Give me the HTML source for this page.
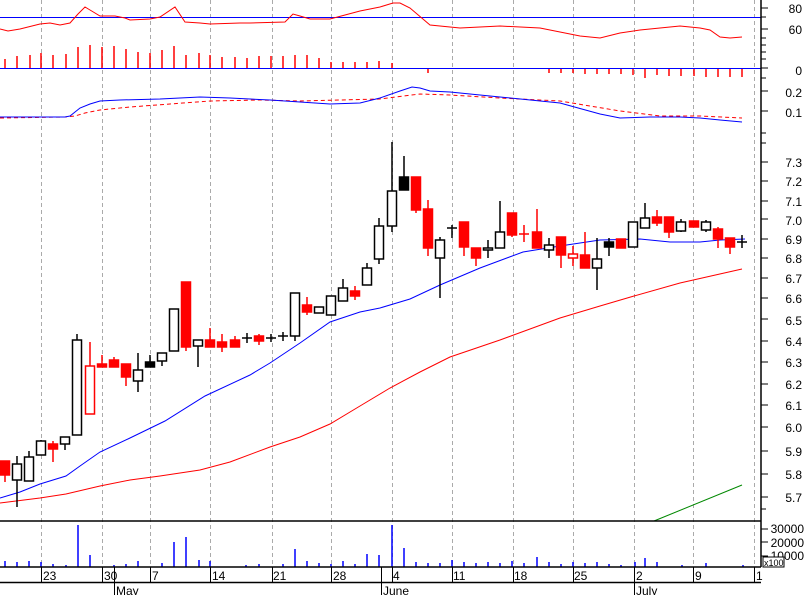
<!DOCTYPE html>
<html><head><style>
html,body{margin:0;padding:0;background:#fff;}
svg{display:block;font-family:"Liberation Sans",sans-serif;}
</style></head><body>
<svg width="806" height="595" viewBox="0 0 806 595" xmlns="http://www.w3.org/2000/svg">
<rect width="806" height="595" fill="#fff"/>
<!-- grid -->
<g stroke="#aaa" stroke-dasharray="4,3" stroke-width="1">
<line x1="41.5" y1="0" x2="41.5" y2="567"/><line x1="102.5" y1="0" x2="102.5" y2="567"/>
<line x1="150.5" y1="0" x2="150.5" y2="567"/><line x1="210.5" y1="0" x2="210.5" y2="567"/>
<line x1="272.5" y1="0" x2="272.5" y2="567"/><line x1="331.5" y1="0" x2="331.5" y2="567"/>
<line x1="392.5" y1="0" x2="392.5" y2="567"/><line x1="452.5" y1="0" x2="452.5" y2="567"/>
<line x1="513.5" y1="0" x2="513.5" y2="567"/><line x1="573.5" y1="0" x2="573.5" y2="567"/>
<line x1="634.5" y1="0" x2="634.5" y2="567"/><line x1="693.5" y1="0" x2="693.5" y2="567"/>
<line x1="754.5" y1="0" x2="754.5" y2="567"/>
</g>
<!-- RSI -->
<line x1="0" y1="17.5" x2="761" y2="17.5" stroke="#00f"/>
<polyline fill="none" stroke="#f00" points="0,29 8,31 20,29 40,24 50,23 60,25 70,23 78,14 85,7 90,10 100,16 115,16 125,18 130,20 150,19 160,17 175,7 185,22 200,23 210,24 240,23 250,23 285,22 293,14 300,16 310,19 330,19 345,15 360,11 380,7 393,3 400,3 410,8 430,25 460,28 500,26 540,28 580,36 600,38 620,33 640,30 660,28 680,26 700,28 710,30 720,37 730,38 742,37"/>
<!-- MACD hist -->
<g stroke="#f00" stroke-width="1.5">
<line x1="5" y1="68" x2="5" y2="59"/><line x1="17" y1="68" x2="17" y2="56"/><line x1="30" y1="68" x2="30" y2="55"/><line x1="41" y1="68" x2="41" y2="53"/><line x1="53" y1="68" x2="53" y2="55"/><line x1="66" y1="68" x2="66" y2="54"/><line x1="78" y1="68" x2="78" y2="47"/><line x1="90" y1="68" x2="90" y2="45"/><line x1="102" y1="68" x2="102" y2="47"/><line x1="114" y1="68" x2="114" y2="46"/><line x1="126" y1="68" x2="126" y2="49"/><line x1="138" y1="68" x2="138" y2="52"/><line x1="150" y1="68" x2="150" y2="53"/><line x1="162" y1="68" x2="162" y2="50"/><line x1="174" y1="68" x2="174" y2="46"/><line x1="186" y1="68" x2="186" y2="55"/><line x1="199" y1="68" x2="199" y2="53"/><line x1="210" y1="68" x2="210" y2="55"/><line x1="222" y1="68" x2="222" y2="57"/><line x1="235" y1="68" x2="235" y2="57"/><line x1="247" y1="68" x2="247" y2="58"/><line x1="259" y1="68" x2="259" y2="56"/><line x1="271" y1="68" x2="271" y2="56"/><line x1="283" y1="68" x2="283" y2="56"/><line x1="295" y1="68" x2="295" y2="55"/><line x1="307" y1="68" x2="307" y2="55"/><line x1="319" y1="68" x2="319" y2="58"/><line x1="331" y1="68" x2="331" y2="62"/><line x1="343" y1="68" x2="343" y2="62"/><line x1="355" y1="68" x2="355" y2="62"/><line x1="367" y1="68" x2="367" y2="62"/><line x1="379" y1="68" x2="379" y2="61"/><line x1="392" y1="68" x2="392" y2="63"/>
<line x1="428" y1="68" x2="428" y2="73"/><line x1="549" y1="68" x2="549" y2="73"/><line x1="561" y1="68" x2="561" y2="73"/><line x1="573" y1="68" x2="573" y2="73"/><line x1="585" y1="68" x2="585" y2="74"/><line x1="597" y1="68" x2="597" y2="74"/><line x1="609" y1="68" x2="609" y2="74"/><line x1="621" y1="68" x2="621" y2="74"/><line x1="633" y1="68" x2="633" y2="75"/><line x1="645" y1="68" x2="645" y2="78"/><line x1="657" y1="68" x2="657" y2="75"/><line x1="669" y1="68" x2="669" y2="76"/><line x1="681" y1="68" x2="681" y2="76"/><line x1="694" y1="68" x2="694" y2="76"/><line x1="706" y1="68" x2="706" y2="77"/><line x1="718" y1="68" x2="718" y2="77"/><line x1="730" y1="68" x2="730" y2="77"/><line x1="742" y1="68" x2="742" y2="77"/>
</g>
<line x1="0" y1="68.5" x2="761" y2="68.5" stroke="#00f"/>
<!-- MACD lines -->
<polyline fill="none" stroke="#f00" stroke-dasharray="4,3" points="0,118 65,117 75,116 85,113 100,110 130,107 170,104 210,101 260,100 300,101 380,99 420,94 450,95 500,98 560,101 620,111 660,116 700,116 742,118"/>
<polyline fill="none" stroke="#00f" points="0,117 65,117 70,116 80,108 90,104 100,101 120,100 160,99 200,97 230,98 270,100 300,102 330,104 360,103 380,98 400,91 412,87 420,88 430,91 450,92 500,97 560,103 600,114 620,118 650,117 680,117 700,118 720,120 742,122"/>
<!-- MAs -->
<polyline fill="none" stroke="#f00" points="0,503 40,498 66,494 100,486 130,480 160,476 200,470 230,462 270,447 300,437 330,424 360,406 390,388 420,372 450,357 500,340 560,318 600,306 634,296 680,283 742,269"/>
<polyline fill="none" stroke="#00f" points="0,498 20,492 40,484 66,476 80,466 100,452 130,438 165,421 205,396 250,375 270,363 300,343 330,322 360,312 380,308 410,299 440,285 480,268 523,252 560,246 600,240 640,239 670,242 700,242 720,240 745,239"/>
<line x1="654" y1="521" x2="742" y2="485" stroke="#080"/>
<!-- candles -->
<g stroke-width="1.5">
<g stroke="#f00" fill="#f00">
<line x1="5" y1="461" x2="5" y2="482"/><rect x="0.5" y="461" width="9" height="14"/>
<line x1="53" y1="441" x2="53" y2="462"/><rect x="48.5" y="444" width="9" height="5"/>
<line x1="90" y1="342" x2="90" y2="366"/><rect x="85.5" y="366" width="9" height="48" fill="#fff"/>
<line x1="102" y1="355" x2="102" y2="364"/><rect x="97.5" y="364" width="9" height="3"/>
<line x1="114" y1="357" x2="114" y2="367"/><rect x="109.5" y="360" width="9" height="7"/>
<line x1="126" y1="364" x2="126" y2="386"/><rect x="121.5" y="364" width="9" height="13"/>
<line x1="186" y1="282" x2="186" y2="351"/><rect x="181.5" y="282" width="9" height="65"/>
<line x1="210" y1="328" x2="210" y2="347"/><rect x="205.5" y="340" width="9" height="7"/>
<line x1="222" y1="334" x2="222" y2="352"/><rect x="217.5" y="342" width="9" height="5"/>
<line x1="235" y1="336" x2="235" y2="347"/><rect x="230.5" y="340" width="9" height="7"/>
<line x1="259" y1="334" x2="259" y2="345"/><rect x="254.5" y="336" width="9" height="5"/>
<line x1="307" y1="297" x2="307" y2="315"/><rect x="302.5" y="305" width="9" height="7"/>
<line x1="355" y1="286" x2="355" y2="300"/><rect x="350.5" y="291" width="9" height="5"/>
<line x1="416" y1="177" x2="416" y2="213"/><rect x="411.5" y="177" width="9" height="33"/>
<line x1="428" y1="200" x2="428" y2="256"/><rect x="423.5" y="209" width="9" height="39"/>
<line x1="464" y1="222" x2="464" y2="256"/><rect x="459.5" y="222" width="9" height="25"/>
<line x1="476" y1="248" x2="476" y2="266"/><rect x="471.5" y="248" width="9" height="10"/>
<line x1="512" y1="213" x2="512" y2="237"/><rect x="507.5" y="213" width="9" height="22"/>
<line x1="524" y1="225" x2="524" y2="242"/><line x1="519" y1="234" x2="529" y2="234"/>
<line x1="537" y1="209" x2="537" y2="248"/><rect x="532.5" y="232" width="9" height="16"/>
<line x1="561" y1="237" x2="561" y2="268"/><rect x="556.5" y="237" width="9" height="18"/>
<line x1="573" y1="246" x2="573" y2="266"/><rect x="568.5" y="254" width="9" height="4" fill="#fff"/>
<line x1="585" y1="232" x2="585" y2="268"/><rect x="580.5" y="255" width="9" height="13"/>
<rect x="616.5" y="239" width="9" height="9"/>
<line x1="657" y1="210" x2="657" y2="226"/><rect x="652.5" y="217" width="9" height="6"/>
<line x1="669" y1="217" x2="669" y2="238"/><rect x="664.5" y="217" width="9" height="15"/>
<rect x="689.5" y="221" width="9" height="6"/>
<line x1="718" y1="227" x2="718" y2="248"/><rect x="713.5" y="229" width="9" height="10"/>
<line x1="730" y1="238" x2="730" y2="254"/><rect x="725.5" y="238" width="9" height="9"/>
</g>
<g stroke="#000" fill="#fff">
<line x1="17" y1="456" x2="17" y2="507"/><rect x="12.5" y="464" width="9" height="16"/>
<line x1="29" y1="451" x2="29" y2="481"/><rect x="24.5" y="457" width="9" height="24"/>
<line x1="41" y1="440" x2="41" y2="455"/><rect x="36.5" y="441" width="9" height="14"/>
<line x1="65" y1="437" x2="65" y2="450"/><rect x="60.5" y="437" width="9" height="7"/>
<line x1="77" y1="334" x2="77" y2="435"/><rect x="72.5" y="340" width="9" height="95"/>
<line x1="138" y1="353" x2="138" y2="392"/><rect x="133.5" y="370" width="9" height="11"/>
<line x1="150" y1="355" x2="150" y2="367"/><rect x="145.5" y="362" width="9" height="5" fill="#000"/>
<line x1="162" y1="353" x2="162" y2="366"/><rect x="157.5" y="353" width="9" height="8"/>
<rect x="169.5" y="309" width="9" height="42"/>
<line x1="198" y1="340" x2="198" y2="367"/><rect x="193.5" y="340" width="9" height="6"/>
<line x1="247" y1="333" x2="247" y2="343"/><line x1="242" y1="338" x2="252" y2="338"/>
<line x1="271" y1="334" x2="271" y2="342"/><line x1="266" y1="338" x2="276" y2="338"/>
<line x1="283" y1="332" x2="283" y2="341"/><line x1="278" y1="336" x2="288" y2="336"/>
<line x1="295" y1="293" x2="295" y2="341"/><rect x="290.5" y="293" width="9" height="43"/>
<rect x="314.5" y="307" width="9" height="6"/>
<rect x="326.5" y="296" width="9" height="19"/>
<line x1="343" y1="279" x2="343" y2="301"/><rect x="338.5" y="288" width="9" height="13"/>
<line x1="367" y1="263" x2="367" y2="285"/><rect x="362.5" y="268" width="9" height="17"/>
<line x1="379" y1="218" x2="379" y2="264"/><rect x="374.5" y="226" width="9" height="33"/>
<line x1="392" y1="142" x2="392" y2="232"/><rect x="387.5" y="191" width="9" height="35"/>
<line x1="404" y1="156" x2="404" y2="190"/><rect x="399.5" y="177" width="9" height="13" fill="#000"/>
<line x1="440" y1="237" x2="440" y2="298"/><rect x="435.5" y="240" width="9" height="18"/>
<line x1="452" y1="225" x2="452" y2="238"/><line x1="447" y1="228" x2="457" y2="228"/>
<line x1="488" y1="240" x2="488" y2="258"/><rect x="483.5" y="248" width="9" height="2"/>
<line x1="500" y1="201" x2="500" y2="248"/><rect x="495.5" y="232" width="9" height="16"/>
<line x1="549" y1="238" x2="549" y2="258"/><rect x="544.5" y="245" width="9" height="5"/>
<line x1="597" y1="238" x2="597" y2="290"/><rect x="592.5" y="259" width="9" height="9"/>
<line x1="609" y1="238" x2="609" y2="256"/><rect x="604.5" y="242" width="9" height="5" fill="#000"/>
<rect x="628.5" y="222" width="9" height="25"/>
<line x1="645" y1="203" x2="645" y2="228"/><rect x="640.5" y="218" width="9" height="10"/>
<line x1="681" y1="219" x2="681" y2="232"/><rect x="676.5" y="222" width="9" height="9"/>
<line x1="706" y1="220" x2="706" y2="232"/><rect x="701.5" y="222" width="9" height="8"/>
<line x1="742" y1="235" x2="742" y2="248"/><line x1="737" y1="242" x2="747" y2="242"/>
</g>
</g>
<!-- volume -->
<g stroke="#00f" stroke-width="1.5">
<line x1="5" y1="567" x2="5" y2="561"/><line x1="17" y1="567" x2="17" y2="562"/><line x1="29" y1="567" x2="29" y2="561"/><line x1="41" y1="567" x2="41" y2="562"/><line x1="53" y1="567" x2="53" y2="564"/><line x1="66" y1="567" x2="66" y2="565"/><line x1="78" y1="567" x2="78" y2="525"/><line x1="90" y1="567" x2="90" y2="555"/><line x1="114" y1="567" x2="114" y2="565"/><line x1="126" y1="567" x2="126" y2="564"/><line x1="138" y1="567" x2="138" y2="561"/><line x1="162" y1="567" x2="162" y2="563"/><line x1="174" y1="567" x2="174" y2="542"/><line x1="186" y1="567" x2="186" y2="537"/><line x1="199" y1="567" x2="199" y2="560"/><line x1="210" y1="567" x2="210" y2="561"/><line x1="246" y1="567" x2="246" y2="565"/><line x1="259" y1="567" x2="259" y2="564"/><line x1="283" y1="567" x2="283" y2="564"/><line x1="295" y1="567" x2="295" y2="549"/><line x1="307" y1="567" x2="307" y2="561"/><line x1="319" y1="567" x2="319" y2="563"/><line x1="331" y1="567" x2="331" y2="564"/><line x1="343" y1="567" x2="343" y2="561"/><line x1="355" y1="567" x2="355" y2="564"/><line x1="367" y1="567" x2="367" y2="554"/><line x1="379" y1="567" x2="379" y2="555"/><line x1="392" y1="567" x2="392" y2="525"/><line x1="404" y1="567" x2="404" y2="548"/><line x1="416" y1="567" x2="416" y2="562"/><line x1="428" y1="567" x2="428" y2="563"/><line x1="440" y1="567" x2="440" y2="563"/><line x1="452" y1="567" x2="452" y2="560"/><line x1="464" y1="567" x2="464" y2="562"/><line x1="476" y1="567" x2="476" y2="563"/><line x1="488" y1="567" x2="488" y2="562"/><line x1="500" y1="567" x2="500" y2="563"/><line x1="512" y1="567" x2="512" y2="561"/><line x1="524" y1="567" x2="524" y2="563"/><line x1="537" y1="567" x2="537" y2="557"/><line x1="549" y1="567" x2="549" y2="562"/><line x1="561" y1="567" x2="561" y2="564"/><line x1="573" y1="567" x2="573" y2="562"/><line x1="585" y1="567" x2="585" y2="563"/><line x1="597" y1="567" x2="597" y2="562"/><line x1="609" y1="567" x2="609" y2="564"/><line x1="621" y1="567" x2="621" y2="565"/><line x1="635" y1="567" x2="635" y2="562"/><line x1="645" y1="567" x2="645" y2="558"/><line x1="657" y1="567" x2="657" y2="562"/><line x1="682" y1="567" x2="682" y2="565"/><line x1="706" y1="567" x2="706" y2="563"/><line x1="743" y1="567" x2="743" y2="565"/>
</g>
<!-- frame lines -->
<g stroke="#000" stroke-width="1.5">
<line x1="0" y1="521" x2="761" y2="521"/>
<line x1="0" y1="567" x2="761" y2="567"/>
<line x1="0" y1="582.5" x2="761" y2="582.5"/>
<line x1="761" y1="0" x2="761" y2="567"/>
</g>
<g stroke="#000" stroke-width="1">
<line x1="41.5" y1="567" x2="41.5" y2="582"/><line x1="102.5" y1="567" x2="102.5" y2="582"/><line x1="150.5" y1="567" x2="150.5" y2="582"/><line x1="210.5" y1="567" x2="210.5" y2="582"/><line x1="272.5" y1="567" x2="272.5" y2="582"/><line x1="331.5" y1="567" x2="331.5" y2="582"/><line x1="392.5" y1="567" x2="392.5" y2="582"/><line x1="452.5" y1="567" x2="452.5" y2="582"/><line x1="513.5" y1="567" x2="513.5" y2="582"/><line x1="573.5" y1="567" x2="573.5" y2="582"/><line x1="634.5" y1="567" x2="634.5" y2="582"/><line x1="693.5" y1="567" x2="693.5" y2="582"/><line x1="754.5" y1="567" x2="754.5" y2="582"/>
<line x1="114.5" y1="567" x2="114.5" y2="595"/><line x1="381.5" y1="567" x2="381.5" y2="595"/><line x1="634.5" y1="582" x2="634.5" y2="595"/>
</g>
<!-- right axis ticks -->
<g stroke="#000" stroke-width="1">
<line x1="761" y1="8" x2="768" y2="8"/><line x1="761" y1="17" x2="766" y2="17"/><line x1="761" y1="29" x2="768" y2="29"/><line x1="761" y1="38" x2="766" y2="38"/><line x1="761" y1="45" x2="766" y2="45"/><line x1="761" y1="52" x2="766" y2="52"/><line x1="761" y1="59" x2="766" y2="59"/><line x1="761" y1="68" x2="768" y2="68"/><line x1="761" y1="78" x2="766" y2="78"/><line x1="761" y1="91" x2="768" y2="91"/><line x1="761" y1="111" x2="768" y2="111"/><line x1="761" y1="133" x2="766" y2="133"/><line x1="761" y1="143" x2="766" y2="143"/>
<line x1="761" y1="162" x2="768" y2="162"/><line x1="761" y1="181" x2="768" y2="181"/><line x1="761" y1="201" x2="768" y2="201"/><line x1="761" y1="219" x2="768" y2="219"/><line x1="761" y1="239" x2="768" y2="239"/><line x1="761" y1="258" x2="768" y2="258"/><line x1="761" y1="278" x2="768" y2="278"/><line x1="761" y1="298" x2="768" y2="298"/><line x1="761" y1="319" x2="768" y2="319"/><line x1="761" y1="341" x2="768" y2="341"/><line x1="761" y1="362" x2="768" y2="362"/><line x1="761" y1="384" x2="768" y2="384"/><line x1="761" y1="405" x2="768" y2="405"/><line x1="761" y1="427" x2="768" y2="427"/><line x1="761" y1="451" x2="768" y2="451"/><line x1="761" y1="474" x2="768" y2="474"/><line x1="761" y1="497" x2="768" y2="497"/><line x1="761" y1="509" x2="766" y2="509"/>
<line x1="761" y1="529" x2="768" y2="529"/><line x1="761" y1="542" x2="768" y2="542"/><line x1="761" y1="556" x2="768" y2="556"/>
</g>
<g font-size="12" fill="#000" text-anchor="end">
<text x="802" y="13">80</text><text x="802" y="34">60</text><text x="802" y="75">0</text>
<text x="802" y="97">0.2</text><text x="802" y="117">0.1</text>
<text x="802" y="167">7.3</text><text x="802" y="186">7.2</text><text x="802" y="206">7.1</text><text x="802" y="225">7.0</text><text x="802" y="244">6.9</text><text x="802" y="263">6.8</text><text x="802" y="283">6.7</text><text x="802" y="303">6.6</text><text x="802" y="325">6.5</text><text x="802" y="346">6.4</text><text x="802" y="367">6.3</text><text x="802" y="389">6.2</text><text x="802" y="410">6.1</text><text x="802" y="432">6.0</text><text x="802" y="456">5.9</text><text x="802" y="479">5.8</text><text x="802" y="502">5.7</text>
<text x="804" y="533">30000</text><text x="804" y="547">20000</text><text x="804" y="560">10000</text>
</g>
<rect x="763" y="557" width="21" height="10" fill="#fff" stroke="#000" stroke-width="1"/>
<text x="764" y="566" font-size="9">x100</text>
<g font-size="12" fill="#000">
<text x="43" y="580">23</text><text x="104" y="580">30</text><text x="152" y="580">7</text><text x="212" y="580">14</text><text x="273" y="580">21</text><text x="333" y="580">28</text><text x="393" y="580">4</text><text x="453" y="580">11</text><text x="514" y="580">18</text><text x="574" y="580">25</text><text x="636" y="580">2</text><text x="695" y="580">9</text><text x="756" y="580">1</text>
<text x="116" y="595">May</text><text x="383" y="595">June</text><text x="636" y="595">July</text>
</g>
</svg>
</body></html>
